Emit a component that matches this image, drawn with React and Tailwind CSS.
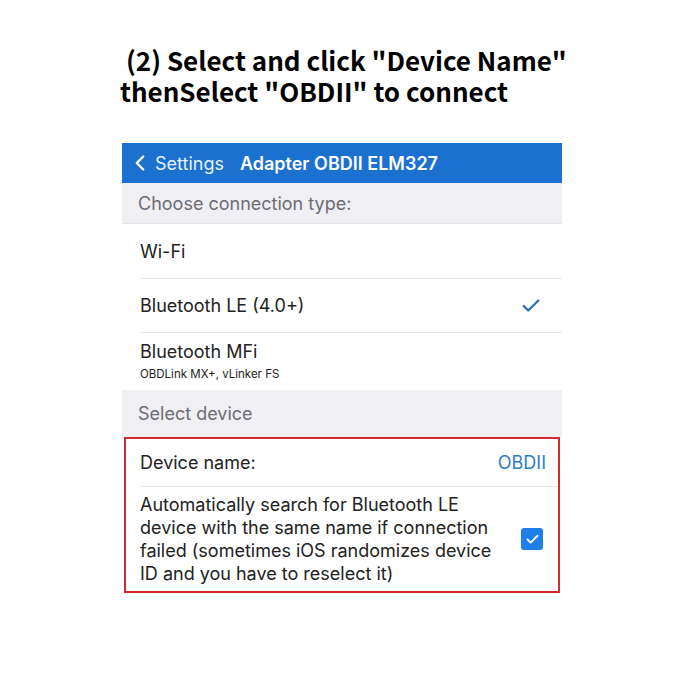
import { ChevronLeft, Check } from 'lucide-react';

const ios = { fontFamily: 'Inter, "Liberation Sans", sans-serif' };

const App = () => {
  return (
    <div className="w-[680px] h-[680px] bg-white flex flex-col">
      {/* Title */}
      <div
        className="pl-[120px] pt-[44px] text-[26px] leading-[31px] font-bold text-black"
        style={{ fontFamily: '"Noto Sans CJK SC", "Noto Sans", sans-serif' }}
      >
        <div className="pl-[6px]">(2) Select and click "Device Name"</div>
        <div>thenSelect "OBDII" to connect</div>
      </div>

      {/* Phone screen */}
      <div className="ml-[122px] w-[440px] mt-[37px] text-[18px]" style={ios}>
        <div className="h-[40px] bg-[#1b70d0] flex items-center text-white">
          <ChevronLeft className="w-[26px] h-[26px] ml-[5px]" strokeWidth={2.2} />
          <span className="ml-[2px] text-[#e6f0fb]">Settings</span>
          <span className="ml-[16px] font-semibold">Adapter OBDII ELM327</span>
        </div>

        <div className="h-[41px] bg-[#efeff4] flex items-center pl-[16px] text-[#6d6d72] border-b border-[#e3e3e8]">
          Choose connection type:
        </div>

        <div className="pl-[18px] bg-white">
          <div className="h-[55px] flex items-center text-[#222] border-b border-[#e6e6ea]">Wi-Fi</div>
          <div className="h-[54px] flex items-center justify-between text-[#222] border-b border-[#e6e6ea]">
            <span>Bluetooth LE (4.0+)</span>
            <Check className="w-[22px] h-[22px] mr-[20px] text-[#2a6db5]" strokeWidth={2.4} />
          </div>
          <div className="h-[57px] flex flex-col justify-center text-[#222]">
            <span className="leading-[22px]">Bluetooth MFi</span>
            <span className="text-[11.5px] leading-[16px] mt-[3px]">OBDLink MX+, vLinker FS</span>
          </div>
        </div>

        <div className="h-[47px] bg-[#efeff4] flex items-center pl-[16px] text-[#6d6d72]">
          Select device
        </div>

        <div className="mx-[2px] border-2 border-[#d12a2f] bg-white">
          <div className="pl-[14px]">
            <div className="h-[48px] flex items-center justify-between border-b border-[#e6e6ea] text-[#222]">
              <span>Device name:</span>
              <span className="mr-[12px] text-[#2d80c3]">OBDII</span>
            </div>
            <div className="flex items-center justify-between py-[6px]">
              <div className="leading-[23px] text-[#222] w-[366px]">
                Automatically search for Bluetooth LE device with the same name if connection failed (sometimes iOS randomizes device ID and you have to reselect it)
              </div>
              <div className="w-[22px] h-[22px] mr-[15px] rounded-[3px] bg-[#1f7fe9] flex items-center justify-center">
                <Check className="w-[15px] h-[15px] text-white" strokeWidth={3} />
              </div>
            </div>
          </div>
        </div>
      </div>
    </div>
  );
};

export default App;
